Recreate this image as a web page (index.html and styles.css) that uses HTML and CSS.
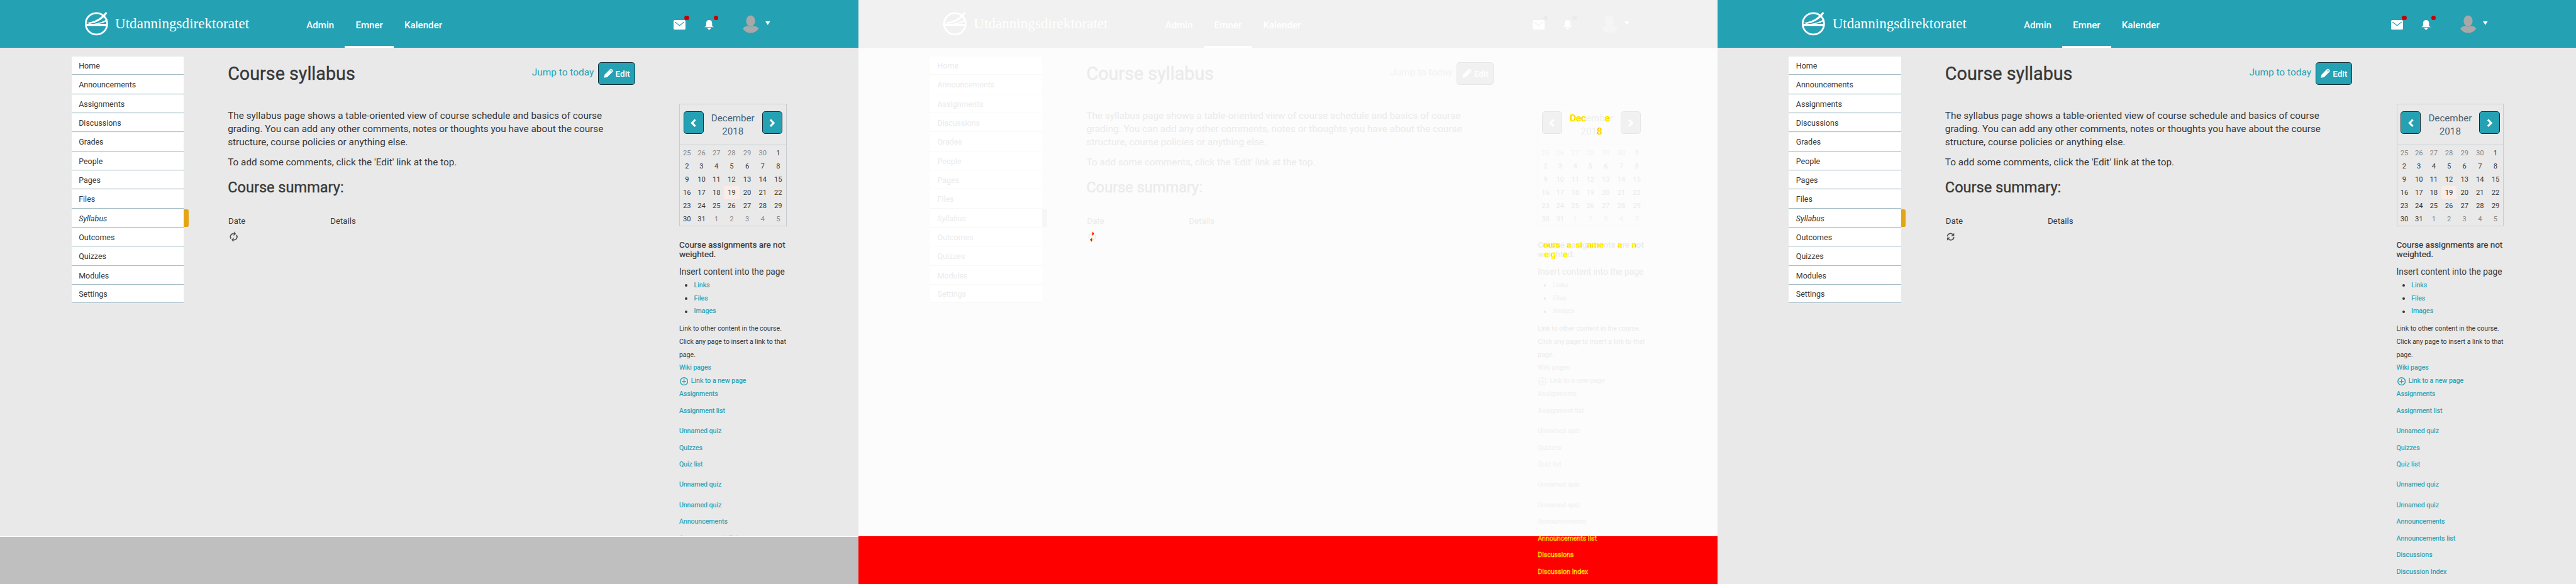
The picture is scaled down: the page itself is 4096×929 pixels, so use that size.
FILE: index.html
```
<!DOCTYPE html>
<html lang="en">
<head>
<meta charset="utf-8">
<title>Course syllabus</title>
<link rel="stylesheet" href="styles.css">
</head>
<body>
<div class="board">
  <section class="panel panel-base"></section>
  <section class="panel panel-diff"></section>
  <section class="panel panel-new"></section>
</div>

<template id="course-page">
  <header class="header">
    <svg class="emblem" viewBox="36 28 120 124">
      <circle cx="94" cy="91" r="54" fill="none" stroke="currentColor" stroke-width="9"/>
      <path d="M42 91H148V102H42Z"/>
      <path d="M42 86Q104 80 141 31L149 37Q116 84 60 91Z"/>
      <path d="M82 91Q122 86 148 67L150 75Q132 87 106 91Z"/>
    </svg>
    <span class="brand">Utdanningsdirektoratet</span>
    <nav class="nav">
      <a class="nav-item">Admin</a>
      <a class="nav-item active">Emner</a>
      <a class="nav-item">Kalender</a>
    </nav>
    <div class="tools">
      <span class="tool mail">
        <svg viewBox="0 0 20 16"><rect width="20" height="16" rx="2"/><path class="flap" d="M2.5 3.2L10 9.2L17.5 3.2"/></svg>
        <i class="dot"></i>
      </span>
      <span class="tool bell">
        <svg viewBox="0 0 16 16"><path d="M3 10V5.5Q3 0 8 0T13 5.5V10L16 12H0ZM5 13H11Q10.500 16 8 16T5 13Z"/></svg>
        <i class="dot"></i>
      </span>
      <svg class="avatar" viewBox="377 28 82 92"><ellipse cx="417" cy="58" rx="23" ry="28"/><path d="M377 97Q390 83 404 84Q417 91 430 84Q446 83 459 97Q444 120 417 120T377 97Z"/></svg>
      <svg class="caret" viewBox="0 0 8 6"><path d="M0 0H8L4 6Z"/></svg>
    </div>
  </header>
  <div class="content">
    <ul class="menu">
      <li>Home</li><li>Announcements</li><li>Assignments</li><li>Discussions</li><li>Grades</li><li>People</li><li>Pages</li><li>Files</li><li class="current">Syllabus</li><li>Outcomes</li><li>Quizzes</li><li>Modules</li><li>Settings</li>
    </ul>
    <main class="main">
      <div class="title-row">
        <h1>Course syllabus</h1>
        <a class="jump">Jump to today</a>
        <button class="btn edit"><svg viewBox="0 0 16 16"><path fill-rule="evenodd" d="M.3 15.700L1.500 10.200L10.300 1.300Q12 -.3 14.200 1.700T14.600 5.700L5.800 14.500ZM12.300 2.900a1 1 0 1 0 .1 0Z"/></svg>Edit</button>
      </div>
      <p>The syllabus page shows a table-oriented view of course schedule and basics of course<br>grading. You can add any other comments, notes or thoughts you have about the course<br>structure, course policies or anything else.</p>
      <p>To add some comments, click the 'Edit' link at the top.</p>
      <h2>Course summary:</h2>
      <div class="columns"><span>Date</span><span>Details</span></div>
      <svg class="refresh" viewBox="0 0 14 14"><path class="arc" d="M1.500 6.500A5.300 5.300 0 0 1 10.500 3M12.500 7.500A5.300 5.300 0 0 1 3.500 11"/><path class="tip" d="M13 .5V5.800H7.700ZM1 13.500V8.200H6.300Z"/></svg>
    </main>
    <aside class="side">
      <div class="calendar">
        <div class="cal-head">
          <button class="btn arrow"><svg viewBox="0 0 10 14"><path d="M8 1.500L2.500 7L8 12.500"/></svg></button>
          <span class="month"><i class="d">Dec</i>emb<i class="d">e</i>r<br>201<i class="d">8</i></span>
          <button class="btn arrow"><svg viewBox="0 0 10 14"><path d="M2 1.500L7.500 7L2 12.500"/></svg></button>
        </div>
        <div class="days">
          <b>25</b><b>26</b><b>27</b><b>28</b><b>29</b><b>30</b><span>1</span>
          <span>2</span><span>3</span><span>4</span><span>5</span><span>6</span><span>7</span><span>8</span>
          <span>9</span><span>10</span><span>11</span><span>12</span><span>13</span><span>14</span><span>15</span>
          <span>16</span><span>17</span><span>18</span><span class="today">19</span><span>20</span><span>21</span><span>22</span>
          <span>23</span><span>24</span><span>25</span><span>26</span><span>27</span><span>28</span><span>29</span>
          <span>30</span><span>31</span><b>1</b><b>2</b><b>3</b><b>4</b><b>5</b>
        </div>
      </div>
      <div class="weights">C<i class="d">ours</i>e <i class="d">a</i>s<i class="d">si</i>g<i class="d">nme</i>nts <i class="d">a</i>re <i class="d">n</i>ot<br>w<i class="d">e</i>i<i class="d">g</i>ht<i class="d">e</i>d.</div>
      <div class="insert">Insert content into the page</div>
      <ul class="kinds"><li><a>Links</a></li><li><a>Files</a></li><li><a>Images</a></li></ul>
      <div class="hint">Link to other content in the course.<br>Click any page to insert a link to that<br>page.</div>
      <div class="links">
        <a>Wiki pages</a>
        <a class="new-page"><svg viewBox="0 0 14 14"><circle cx="7" cy="7" r="6.200"/><path d="M7 3.500V10.500M3.500 7H10.500"/></svg>Link to a new page</a>
        <a>Assignments</a>
        <a class="near">Assignment list</a>
        <a class="far">Unnamed quiz</a>
        <a class="near">Quizzes</a>
        <a class="near">Quiz list</a>
        <a class="far">Unnamed quiz</a>
        <a class="far">Unnamed quiz</a>
        <a class="near">Announcements</a>
        <a class="near late">Announcements list</a>
        <a class="near late">Discussions</a>
        <a class="near late">Discussion Index</a>
      </div>
    </aside>
  </div>
  <div class="tail"></div>
</template>
<script src="panels.js"></script>
</body>
</html>
```
FILE: panels.js
```
// The three panels show the same page; styles.css themes each one.
const page = document.getElementById('course-page');
document.querySelectorAll('.panel').forEach(panel => {
  panel.append(page.content.cloneNode(true));
});
```
FILE: styles.css
```
* { box-sizing: border-box; }
html, body { margin: 0; height: 100%; overflow: hidden; background: #e9e9e9; }
ul, p, h1, h2 { margin: 0; padding: 0; list-style: none; }
i { font-style: normal; }

.board {
  display: flex;
  width: 4320px;
  height: 980px;
  zoom: 0.94815;
  overflow: hidden;
  font-family: Roboto, "Liberation Sans", sans-serif;
}
.panel {
  --bar: #25a1b4;
  --bg: #e9e9e9;
  --ink: #383838;
  --muted: #888;
  --link: #25a1b4;
  --month: #4a6276;
  --line: #c7cdd1;
  --menu-line: #a6bdc6;
  --menu-gap: #f2f6f6;
  --mark: #e4a513;
  --btn-line: #0c2b36;
  --dot: #c80000;
  --avatar: #a8a8a8;
  --today: #fbece6;
  --refresh: #555;
  position: relative;
  flex: 0 0 1440px;
  height: 980px;
  overflow: hidden;
  background: var(--bg);
  color: var(--ink);
}
.panel-diff {
  --bar: #f1f1f1;
  --bg: #fcfcfc;
  --ink: #ebebeb;
  --muted: #f3f3f3;
  --link: #f2f2f2;
  --month: #eee;
  --line: #f8f8f8;
  --menu-line: #f8f8f8;
  --menu-gap: #fff;
  --mark: #f6f6f6;
  --btn-line: #e6e6e6;
  --dot: #ebebeb;
  --avatar: #f5f5f5;
  --today: #fdfdfd;
  --refresh: #ebebeb;
}

/* Header */
.header {
  display: flex;
  align-items: center;
  height: 80px;
  padding-left: 142px;
  background: var(--bar);
  color: #fff;
}
.header svg { display: block; fill: currentColor; }
.emblem { width: 40px; height: 41.300px; }
.brand {
  width: 303px;
  margin-left: 11px;
  font: 24.400px/80px "Liberation Serif", serif;
}
.nav { display: flex; width: 634px; }
.nav-item {
  height: 80px;
  padding: 5px 18px 0;
  font-weight: 500;
  font-size: 15.950px;
  line-height: 75px;
}
.nav-item.active { border-bottom: 4px solid #fff; }
.tools { display: flex; align-items: center; }
.tool { position: relative; height: 16px; margin-top: 4px; }
.tool svg { height: 16px; }
.mail { width: 20px; }
.bell { width: 16px; margin-left: 31px; }
.flap { fill: none; stroke: var(--bar); stroke-width: 1.200; }
.dot {
  position: absolute;
  top: -8px;
  left: 18px;
  width: 8px;
  height: 8px;
  border-radius: 50%;
  background: var(--dot);
}
.bell .dot { left: 16px; }
.header .avatar { width: 27px; height: 30px; margin-left: 49px; fill: var(--avatar); }
.caret { width: 8px; height: 6px; margin: -2px 0 0 11px; }

/* Page columns */
.content { display: flex; align-items: flex-start; padding: 0 0 0 120px; }

.menu { width: 188px; margin-top: 15px; background: var(--menu-gap); }
.menu li {
  position: relative;
  height: 31px;
  margin-bottom: 1px;
  padding-left: 12px;
  background: #fff;
  border-bottom: 1px solid var(--menu-line);
  font-size: 13.200px;
  line-height: 31px;
}
.menu li:last-child { height: 30px; margin: 0; line-height: 29px; }
.menu .current { font-style: italic; }
.menu .current::after {
  content: "";
  position: absolute;
  top: 0;
  left: 100%;
  width: 8px;
  height: 30px;
  border-radius: 0 3px 3px 0;
  background: var(--mark);
}

.main { width: 683px; margin: 24px 0 0 74px; }
.title-row { display: flex; height: 38px; margin-bottom: 41.500px; }
h1, h2 { font-weight: 400; -webkit-text-stroke: 0.400px currentColor; }
h1 { flex: 1; font-size: 30.300px; line-height: 39px; }
.jump { margin-right: 7px; color: var(--link); font-size: 16.300px; line-height: 35px; }
.btn {
  display: flex;
  align-items: center;
  height: 38px;
  padding: 0;
  border: 1px solid var(--btn-line);
  border-radius: 5px;
  background: var(--bar);
  color: #fff;
  font-family: inherit;
}
.edit { gap: 4px; width: 62px; padding-left: 8px; font-weight: 500; font-size: 14.300px; }
.edit svg { width: 16px; height: 16px; fill: #fff; }
p { font-size: 16.180px; line-height: 22px; white-space: nowrap; }
p + p { margin-top: 12px; }
h2 { margin: 16px 0 32.500px; font-size: 24.850px; line-height: 30px; }
.columns { display: grid; grid-template-columns: 171px 1fr; padding-left: 1px; font-size: 14px; line-height: 20px; }
.refresh { display: block; width: 14px; height: 14px; margin: 8px 0 0 2.500px; transform: rotate(-40deg); }
.refresh .arc { fill: none; stroke: var(--refresh); stroke-width: 1.800; }
.refresh .tip { fill: var(--refresh); }
.panel-new .refresh { transform: none; }

/* Right column */
.side { position: relative; z-index: 1; width: 180px; margin: 94px 0 0 74px; font-size: 11.160px; line-height: 22px; white-space: nowrap; }
.calendar { height: 206px; border: 1px solid var(--line); }
.cal-head {
  display: flex;
  justify-content: space-between;
  align-items: flex-start;
  height: 69px;
  padding: 12px 6px 0;
  border-bottom: 1px solid var(--line);
}
.arrow { justify-content: center; width: 34px; }
.arrow svg { width: 10px; height: 14px; fill: none; stroke: #fff; stroke-width: 3.200; }
.month { padding-top: 1px; color: var(--month); font-size: 16px; text-align: center; }
.days {
  display: grid;
  grid-template-columns: 24px 25px 25px repeat(4, 26px);
  padding-top: 2px;
  font-size: 11.800px;
  line-height: 23px;
  grid-auto-rows: 22px;
  text-align: center;
}
.days b { color: var(--muted); font-weight: 400; }
.today { border-radius: 3px; background: var(--today); }
.weights { margin-top: 23px; font-size: 14.250px; line-height: 16px; -webkit-text-stroke: 0.250px currentColor; }
.insert { margin-top: 11px; font-size: 14.500px; line-height: 20px; }
.kinds { margin-top: 2px; }
.kinds li { display: flex; align-items: center; padding-left: 10px; }
.kinds li::before { content: ""; width: 4px; height: 4px; margin-right: 11px; border-radius: 50%; background: var(--ink); }
.side a { color: var(--link); font-size: 11.150px; -webkit-text-stroke: 0.200px currentColor; }
.hint { margin-top: 7px; }
.links { display: flex; flex-direction: column; }
.new-page { display: flex; align-items: center; gap: 5px; padding-left: 1px; }
.new-page svg { width: 14px; height: 14px; fill: none; stroke: var(--link); stroke-width: 1.500; }
.near { margin-top: 6px; }
.far { margin-top: 12px; }

/* Area past the end of the shorter page */
.tail { display: none; position: absolute; left: 0; right: 0; bottom: 0; height: 80px; }
.panel-base .tail { display: block; z-index: 2; border-top: 1px solid #fff; background: #bfbfbf; }
.panel-diff .tail { display: block; background: #f00; }

/* Changed glyphs */
.panel-diff .d { color: #f00; -webkit-text-stroke: 0.900px #ff0; }
.panel-diff .side .late { color: #f00; -webkit-text-stroke: 0.550px #ff0; }
.panel-diff .refresh .tip { fill: #f00; stroke: #ff0; stroke-width: 0.300; }
```
